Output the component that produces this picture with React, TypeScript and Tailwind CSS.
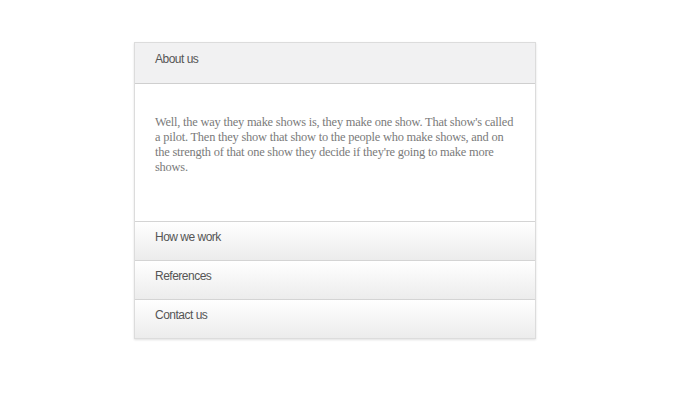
import React, { useState } from 'react';

const sections = [
  {
    title: 'About us',
    lines: [
      "Well, the way they make shows is, they make one show. That show's called",
      'a pilot. Then they show that show to the people who make shows, and on',
      "the strength of that one show they decide if they're going to make more",
      'shows.',
    ],
  },
  { title: 'How we work', lines: [] },
  { title: 'References', lines: [] },
  { title: 'Contact us', lines: [] },
];

export default function App() {
  const [open, setOpen] = useState(0);

  return (
    <div className="w-[700px] h-[400px] bg-white pt-[42px] pl-[134px]">
      <div className="w-[402px] border border-[#dcdcdc] shadow-[0_1px_2px_rgba(0,0,0,0.12)]">
        {sections.map((s, i) => (
          <div key={s.title} className={i > 0 ? 'border-t border-[#d4d4d4]' : ''}>
            <button
              type="button"
              onClick={() => setOpen(open === i ? -1 : i)}
              className={`w-full text-left px-5 text-[12px] leading-[16px] text-[#555] font-['Liberation_Sans',Arial,sans-serif] tracking-[-0.5px] flex items-start ${
                open === i
                  ? 'pt-[8px] bg-[#f1f1f2] h-[41px] border-b border-[#cfcfcf]'
                  : 'pt-[7px] h-[38px] bg-gradient-to-b from-[#ffffff] to-[#ececec]'
              }`}
            >
              {s.title}
            </button>
            {open === i && (
              <div className="h-[137px] px-5 pt-[31px] bg-white">
                <p className="whitespace-nowrap text-[12.4px] leading-[15px] text-[#7a7a7a] tracking-[-0.2px] font-['Liberation_Serif','Times_New_Roman',serif]">
                  {s.lines.map((l, j) => (
                    <React.Fragment key={j}>
                      {l}
                      {j < s.lines.length - 1 && <br />}
                    </React.Fragment>
                  ))}
                </p>
              </div>
            )}
          </div>
        ))}
      </div>
    </div>
  );
}
